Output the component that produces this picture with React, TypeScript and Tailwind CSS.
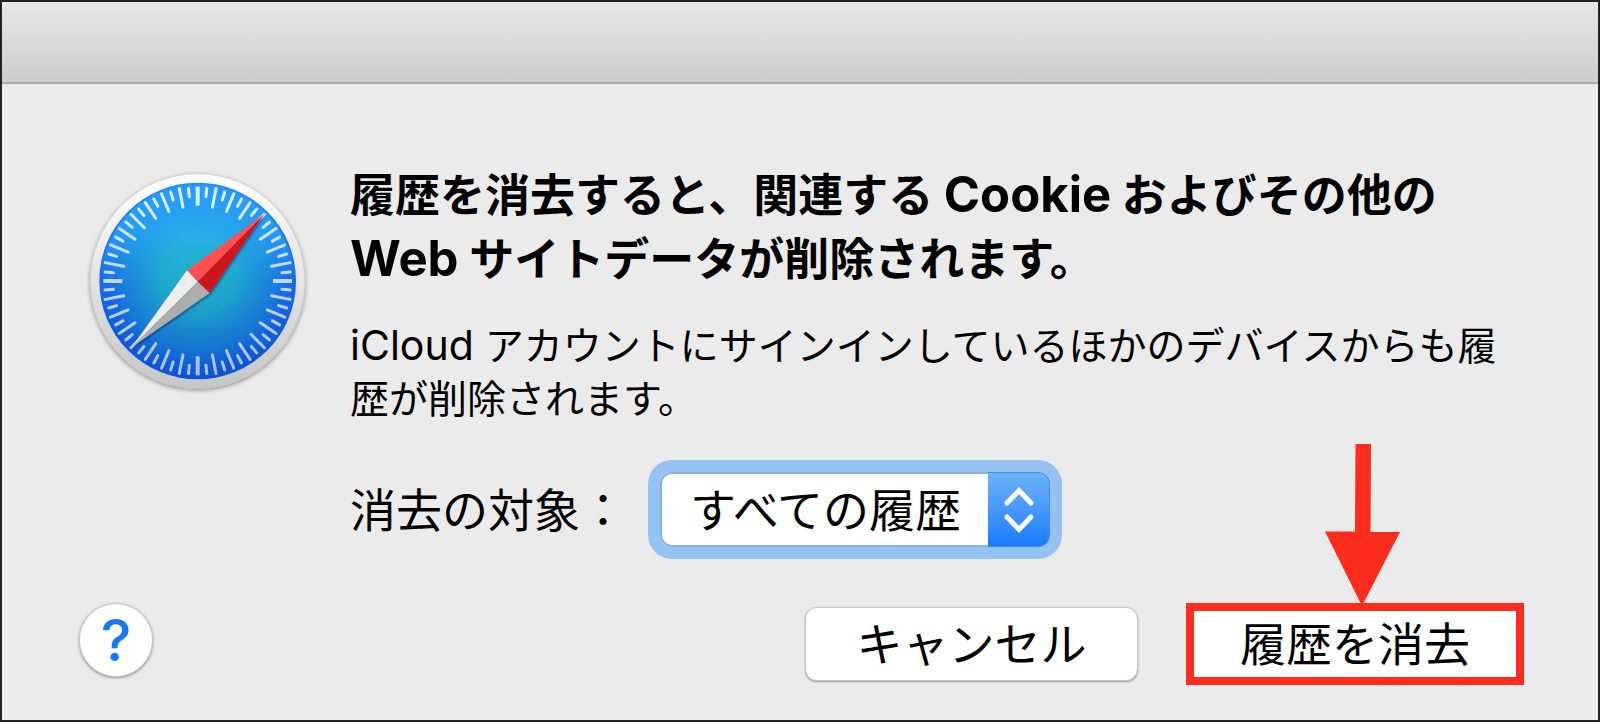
import { useState } from 'react';

interface Tick {
  angle: number;
  cardinal: boolean;
  long: boolean;
}

// 64 marks round the dial, every second one is long
const ticks: Tick[] = Array.from({ length: 64 }, (_, i) => ({
  angle: i * 5.625,
  cardinal: i % 16 === 0,
  long: i % 2 === 0,
}));

function CompassIcon() {
  return (
    <svg viewBox="30 36 648 660" className="w-[216px] h-[220px] shrink-0 overflow-visible" role="img" aria-label="Safari">
      <defs>
        <linearGradient id="bezel" x1="0" y1="0" x2="0" y2="1">
          <stop offset="0" stopColor="#ffffff" />
          <stop offset="0.5" stopColor="#e4e4e4" />
          <stop offset="1" stopColor="#c6c6c6" />
        </linearGradient>
        <linearGradient id="dial" x1="0" y1="0" x2="0" y2="1">
          <stop offset="0" stopColor="#1b8dfb" />
          <stop offset="0.3" stopColor="#1a74f6" />
          <stop offset="0.6" stopColor="#1562ee" />
          <stop offset="1" stopColor="#0b52dc" />
        </linearGradient>
        <radialGradient id="glow" gradientUnits="userSpaceOnUse" cx="353" cy="350" r="295">
          <stop offset="0" stopColor="#1fb4c8" />
          <stop offset="0.4" stopColor="#1fa9cc" stopOpacity="0.94" />
          <stop offset="0.75" stopColor="#1c90d6" stopOpacity="0.65" />
          <stop offset="1" stopColor="#1a78ee" stopOpacity="0" />
        </radialGradient>
        <linearGradient id="shade" x1="0" y1="0" x2="0" y2="1">
          <stop offset="0" stopColor="#2fa0ff" stopOpacity="0.7" />
          <stop offset="0.25" stopColor="#2cb8ff" stopOpacity="0.5" />
          <stop offset="0.5" stopColor="#22b8e8" stopOpacity="0" />
          <stop offset="0.5" stopColor="#0a5aa8" stopOpacity="0" />
          <stop offset="1" stopColor="#0a5ab4" stopOpacity="0.3" />
        </linearGradient>
        <linearGradient id="marks" gradientUnits="userSpaceOnUse" x1="0" y1="80" x2="0" y2="648">
          <stop offset="0" stopColor="#dff0ff" />
          <stop offset="1" stopColor="#a9bede" />
        </linearGradient>
        <mask id="tickMask" maskUnits="userSpaceOnUse" x="30" y="36" width="648" height="660">
          {ticks.map((t) => (
            <line
              key={t.angle}
              x1="353"
              x2="353"
              y1={t.long ? 80 : 84}
              y2={t.long ? 137 : 109}
              stroke="#fff"
              strokeWidth={t.cardinal ? 12 : 9}
              strokeLinecap={t.cardinal ? 'butt' : 'round'}
              transform={`rotate(${t.angle} 353 363)`}
            />
          ))}
        </mask>
        <filter id="drop" x="-10%" y="-10%" width="120%" height="125%">
          <feDropShadow dx="0" dy="5" stdDeviation="6" floodColor="#000" floodOpacity="0.4" />
        </filter>
        <filter id="needleDrop" x="-10%" y="-10%" width="120%" height="120%">
          <feDropShadow dx="2" dy="6" stdDeviation="3" floodColor="#003060" floodOpacity="0.6" />
        </filter>
      </defs>
      <circle cx="353" cy="363" r="322" fill="url(#bezel)" stroke="#c4c4c4" strokeWidth="2" filter="url(#drop)" />
      <circle cx="353" cy="363" r="295" fill="url(#dial)" />
      <circle cx="353" cy="363" r="290" fill="url(#glow)" />
      <circle cx="353" cy="363" r="290" fill="url(#shade)" />
      <rect x="30" y="36" width="648" height="660" fill="url(#marks)" mask="url(#tickMask)" />
      <g filter="url(#needleDrop)">
        <path d="M552 163 321 331 353 365z" fill="#ff5150" />
        <path d="M552 163 353 365 389 399z" fill="#cf171f" />
        <path d="M155 562 321 331 353 365z" fill="#ededed" />
        <path d="M155 562 353 365 389 399z" fill="#adadad" />
      </g>
    </svg>
  );
}

function RangeSelect() {
  const [range, setRange] = useState('all');

  return (
    <div className="relative flex rounded-xl ring-12 ring-[#96c2f1]">
      <select
        id="range"
        value={range}
        onChange={(e) => setRange(e.target.value)}
        className="h-[75px] w-[390px] appearance-none rounded-xl border-2 border-[#86b3e6] bg-white pl-7 text-[46px] leading-[64px] text-black outline-none"
      >
        <option value="all">すべての履歴</option>
      </select>
      <span className="pointer-events-none absolute inset-y-0 right-0 flex w-[62px] items-center justify-center rounded-r-xl border-y border-r border-[#3f8de8] bg-linear-to-b from-[#6cb1f8] to-[#157cfd]">
        <svg viewBox="0 0 32 48" className="h-12 w-8" fill="none" stroke="#fff" strokeWidth="5" strokeLinecap="round" strokeLinejoin="miter">
          <path d="M4 17 16 4.500 28 17" />
          <path d="M4 31 16 43.500 28 31" />
        </svg>
      </span>
    </div>
  );
}

function App() {
  return (
    <div className="min-h-screen flex flex-col border-2 border-[#232122] bg-[#ebebeb] text-black font-[Inter,'Noto_Sans_CJK_JP',sans-serif]">
      <header className="h-[82px] rounded-t-lg border-b-2 border-[#adadad] bg-linear-to-b from-[#e7e7e7] to-[#cdcdcd]" />

      <main className="flex flex-1 flex-col">
        <div className="flex gap-11 pt-20 pl-[88px] pr-24">
          <div className="pt-2">
            <CompassIcon />
          </div>
          <div className="flex-1">
            <h1 className="text-[45px] leading-[64px] font-bold">
              履歴を消去すると、関連する <span className="text-[49px] leading-none">Cookie</span> およびその他の
              <br />
              <span className="text-[49px] leading-none">Web</span> サイトデータが削除されます。
            </h1>
            <p className="mt-[27px] text-[39px] leading-[53px]">
              <span className="text-[41px] leading-none">iCloud</span> アカウントにサインインしているほかのデバイスからも履
              <br />
              歴が削除されます。
            </p>
            <div className="mt-[47px] flex items-center gap-[34px]">
              <label htmlFor="range" className="text-[46px] leading-[64px]">
                消去の対象：
              </label>
              <RangeSelect />
            </div>
          </div>
        </div>

        <footer className="mt-14 flex items-start pl-[77px] pr-[74px]">
          <button
            type="button"
            aria-label="ヘルプ"
            className="flex size-[74px] items-center justify-center rounded-full border border-[#c8c8c8] bg-white text-[58px] leading-none font-medium text-[#147afb] shadow-[0_1px_3px_rgba(0,0,0,0.4)]"
          >
            ?
          </button>
          <button
            type="button"
            className="ml-auto h-[74px] w-[333px] self-center rounded-xl border border-[#c6c6c6] bg-white text-[46px] leading-[64px] shadow-[0_1px_2px_rgba(0,0,0,0.35)]"
          >
            キャンセル
          </button>
          <div className="relative ml-12">
            <button type="button" className="block h-[82px] w-[338px] border-8 border-[#fd2c1d] bg-white text-[46px] leading-[64px]">
              履歴を消去
            </button>
            {/* pointer to the confirm button */}
            <svg viewBox="0 0 75 162" className="pointer-events-none absolute bottom-[79px] left-[139px] h-[162px] w-[75px]" fill="#fd2c1d">
              <path d="M30.500 0h15.500l-.5 88H75L37 162 0 87.500h30z" />
            </svg>
          </div>
        </footer>
      </main>
    </div>
  );
}

export default App;
